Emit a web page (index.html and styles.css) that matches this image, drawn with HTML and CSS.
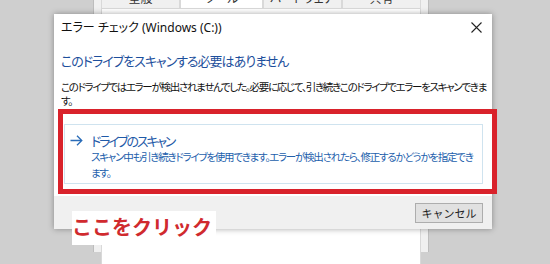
FILE: index.html
```html
<!DOCTYPE html>
<html lang="ja">
<head>
<meta charset="UTF-8" />
<title>エラー チェック</title>
<link rel="stylesheet" href="styles.css">
</head>
<body>

<!-- 後ろのプロパティウィンドウ -->
<div class="bgwin">
  <div class="tabs">
    <div class="tab">全般</div>
    <div class="tab active">ツール</div>
    <div class="tab">ハードウェア</div>
    <div class="tab">共有</div>
  </div>
  <div class="panel"></div>
</div>

<!-- ダイアログ -->
<div class="dialog">
  <div class="titlebar">
    <span class="title">エラー チェック (Windows (C:))</span>
    <span class="close">
      <svg width="11" height="11" viewBox="0 0 11 11"><path d="M0.5 0.5 L10.5 10.5 M10.5 0.5 L0.5 10.5" stroke="#222" stroke-width="1.1" fill="none"/></svg>
    </span>
  </div>
  <div class="content">
    <h1 class="instruction">このドライブをスキャンする必要はありません</h1>
    <p class="message">このドライブではエラーが検出されませんでした。必要に応じて、引き続きこのドライブでエラーをスキャンできま<br>す。</p>
    <div class="cmdlink">
      <span class="arrow">
        <svg width="13" height="11" viewBox="0 0 13 11"><path d="M0.5 5.5 H12 M7 0.8 L11.8 5.5 L7 10.2" stroke="#2a6cb8" stroke-width="1.3" fill="none"/></svg>
      </span>
      <div class="cmdtext">
        <div class="cmdtitle">ドライブのスキャン</div>
        <div class="cmddesc">スキャン中も引き続きドライブを使用できます。エラーが検出されたら、修正するかどうかを指定でき<br>ます。</div>
      </div>
    </div>
  </div>
  <div class="footer">
    <button class="btn">キャンセル</button>
  </div>
</div>

<!-- 注釈 -->
<div class="redbox"></div>
<div class="note">ここをクリック</div>

</body>
</html>
```

FILE: styles.css
```css
/* 全体 */
body {
  margin: 0;
  width: 550px;
  height: 264px;
  overflow: hidden;
  position: relative;
  background: #cfcfcf;
  font-family: "Noto Sans", "Noto Sans CJK JP", sans-serif;
  font-feature-settings: "palt";
}

/* 後ろのウィンドウ */
.bgwin {
  margin-left: 93px;
  width: 336px;
  height: 264px;
  background: #f0f0f0;
  padding: 0 7px;
  box-sizing: border-box;
  border-left: 1px solid #bdbdbd;
  border-right: 1px solid #bdbdbd;
}
.tabs {
  display: flex;
  margin-top: -12px;
  height: 20px;
}
.tab {
  flex: 1;
  text-align: center;
  font-size: 12px;
  line-height: 20px;
  color: #333;
  background: #f0f0f0;
  border: 1px solid #d9d9d9;
  border-bottom: none;
}
.tab.active {
  background: #fff;
  flex: 1.05;
}
.panel {
  height: 260px;
  background: #fff;
  border: 1px solid #d9d9d9;
}

/* ダイアログ */
.dialog {
  position: absolute;
  left: 54px;
  top: 14px;
  width: 438px;
  height: 215px;
  background: #fff;
  box-shadow: 0 0 6px rgba(0,0,0,0.35);
  display: flex;
  flex-direction: column;
}
.titlebar {
  height: 26px;
  display: flex;
  align-items: center;
  justify-content: space-between;
  padding: 0 10px 0 7px;
}
.title {
  font-size: 12px;
  color: #111;
}
.close {
  display: flex;
}
.content {
  flex: 1;
  padding: 0 6px 0 7px;
}
.instruction {
  margin: 13px 0 0;
  font-size: 13px;
  letter-spacing: -1px;
  font-weight: normal;
  line-height: 17px;
  color: #1d4f9c;
}
.message {
  margin: 10px 0 0;
  font-size: 10.5px;
  letter-spacing: -1.3px;
  line-height: 14px;
  color: #111;
  white-space: nowrap;
}
.cmdlink {
  margin: 16px 3px 0 3px;
  height: 60px;
  border: 1px solid #cfe3ef;
  display: flex;
  align-items: flex-start;
  padding: 8px 0 0 5px;
  box-sizing: border-box;
}
.arrow {
  display: flex;
  margin-top: 2px;
  width: 21px;
  flex-shrink: 0;
}
.cmdtitle {
  font-size: 13px;
  letter-spacing: -2.2px;
  line-height: 16px;
  color: #1f5aa8;
}
.cmddesc {
  font-size: 10.5px;
  letter-spacing: -1.25px;
  line-height: 16px;
  color: #2360ac;
  white-space: nowrap;
}

/* 下部 */
.footer {
  height: 33px;
  background: #f0f0f0;
  display: flex;
  justify-content: flex-end;
  align-items: center;
  padding-right: 9px;
}
.btn {
  width: 68px;
  height: 20px;
  background: #e1e1e1;
  border: 1px solid #adadad;
  font-family: inherit;
  font-size: 11px;
  color: #222;
  padding: 0;
}

/* 注釈 */
.redbox {
  position: absolute;
  left: 58px;
  top: 109px;
  width: 439px;
  height: 85px;
  border: 5px solid #d9222b;
  box-sizing: border-box;
}
.note {
  position: absolute;
  left: 72px;
  top: 211px;
  width: 144px;
  height: 34px;
  background: #fff;
  color: #d02a2e;
  font-size: 20px;
  font-weight: bold;
  line-height: 34px;
  box-sizing: border-box;
  font-feature-settings: normal;
}
```
